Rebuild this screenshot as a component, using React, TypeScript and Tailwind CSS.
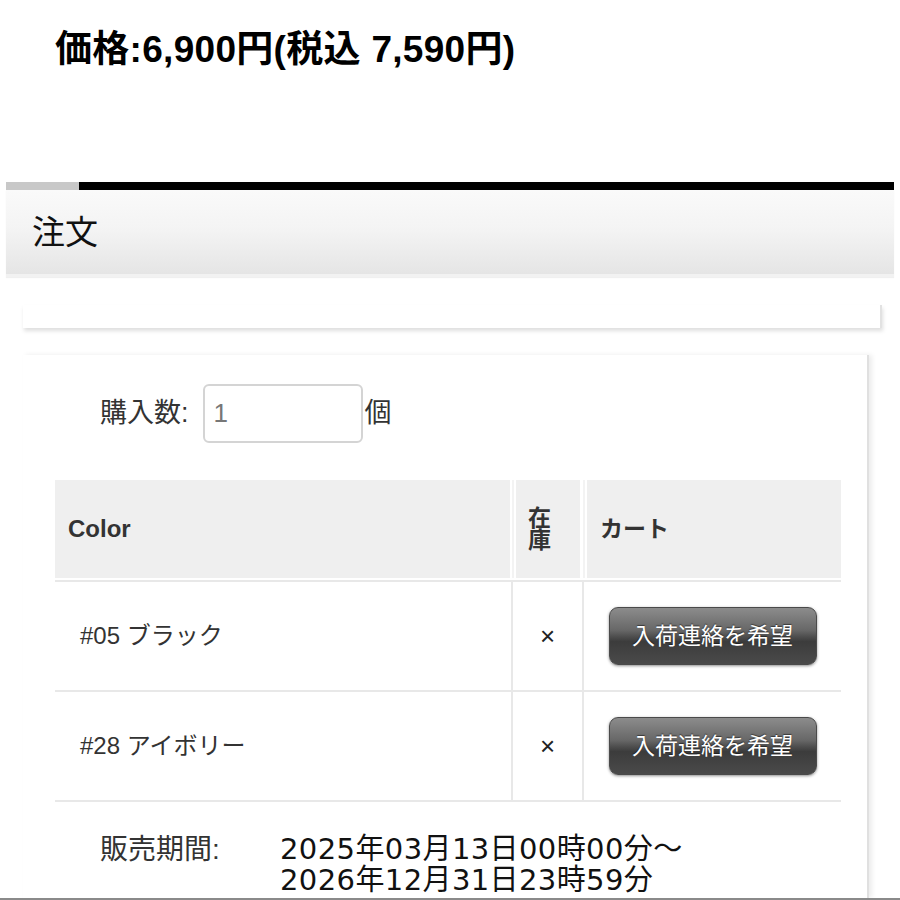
import React from 'react';

const rows = [
  { name: '#05 ブラック', stock: '×' },
  { name: '#28 アイボリー', stock: '×' },
];

const NotifyButton = () => (
  <button className="w-[208px] h-[58px] rounded-[9px] border border-[#4a4a4a] bg-[linear-gradient(to_bottom,#8c8c8c_0%,#676767_40%,#4c4c4c_52%,#3c3c3c_60%,#4a4a4a_100%)] shadow-[0_1px_3px_rgba(0,0,0,0.45)] text-white text-[23px] leading-none [text-shadow:0_-1px_1px_rgba(0,0,0,0.5)]">
    入荷連絡を希望
  </button>
);

export default function App() {
  return (
    <div className="w-[900px] h-[900px] overflow-hidden bg-white flex flex-col font-['Liberation_Sans','Noto_Sans_CJK_JP',sans-serif] text-[#222]">
      {/* price */}
      <div className="h-[182px] shrink-0 px-[55px] pt-[31px]">
        <p className="text-[37px] font-bold leading-none tracking-[0.3px] text-black">価格:6,900円(税込 7,590円)</p>
      </div>

      {/* section bar */}
      <div className="mx-[6px] flex h-[8px] shrink-0">
        <div className="w-[73px] bg-[#c8c8c8]" />
        <div className="flex-1 bg-black" />
      </div>
      <div className="mx-[6px] h-[87px] shrink-0 flex items-center pl-[26px] bg-[linear-gradient(to_bottom,#fafafa,#f4f4f4_45%,#e5e5e5)] border-b-[3px] border-[#f2f2f2] shadow-[0_1px_1px_rgba(0,0,0,0.06)]">
        <h2 className="text-[33px] font-normal leading-none text-[#111]">注文</h2>
      </div>

      {/* empty card */}
      <div className="ml-[23px] mr-[18px] mt-[28px] h-[23px] shrink-0 bg-white border-r-2 border-[#e2e2e2] shadow-[1px_3px_4px_rgba(0,0,0,0.13)]" />

      {/* order card */}
      <div className="ml-[23px] mr-[31px] mt-[27px] flex-1 bg-white border-r-2 border-[#e0e0e0] shadow-[3px_0_5px_rgba(0,0,0,0.08)] pt-[29px]">
        <div className="flex items-center pl-[77px]">
          <span className="text-[27px] text-[#333] leading-none">購入数:</span>
          <div className="ml-[14px] w-[160px] h-[59px] rounded-[6px] border-2 border-[#d4d4d4] flex items-center pl-[9px] text-[26px] text-[#777] font-light">1</div>
          <span className="ml-[2px] text-[27px] text-[#333] leading-none">個</span>
        </div>

        <div className="ml-[32px] mr-[26px] mt-[37px]">
          {/* header */}
          <div className="flex h-[100px] pb-[2px]">
            <div className="w-[455px] bg-[#efefef] flex items-center pl-[13px] text-[24px] font-bold text-[#333]">Color</div>
            <div className="w-[6px] flex justify-center"><div className="w-[2px] bg-[#f3f3f3]" /></div>
            <div className="w-[64px] bg-[#efefef] flex items-center pl-[12px]">
              <span className="w-[24px] text-[23px] leading-[22px] font-semibold text-[#333] break-all">在庫</span>
            </div>
            <div className="w-[7px] flex justify-center"><div className="w-[2px] bg-[#f3f3f3]" /></div>
            <div className="flex-1 bg-[#efefef] flex items-center pl-[13px] text-[23px] font-semibold text-[#333]">カート</div>
          </div>

          {/* rows */}
          {rows.map((r, i) => (
            <div key={i} className={`flex border-t-2 border-[#e8e8e8] ${i === rows.length - 1 ? 'border-b-2 h-[112px]' : 'h-[110px]'}`}>
              <div className="w-[456px] flex items-center pl-[25px] text-[24px] text-[#333]">{r.name}</div>
              <div className="w-[71px] border-l-2 border-[#e8e8e8] flex items-center justify-center text-[26px] text-[#222]">{r.stock}</div>
              <div className="flex-1 border-l-2 border-[#e8e8e8] flex items-center justify-center">
                <NotifyButton />
              </div>
            </div>
          ))}

          {/* sales period */}
          <div className="flex mt-[32px] pl-[45px]">
            <span className="w-[180px] text-[28px] leading-[31px] text-[#333]">販売期間:</span>
            <div className="font-['DejaVu_Sans','Noto_Sans_CJK_JP',sans-serif] text-[29px] leading-[31px] tracking-[0.4px] text-[#111]">
              <div>2025年03月13日00時00分～</div>
              <div>2026年12月31日23時59分</div>
            </div>
          </div>
        </div>
      </div>

      <div className="h-[2px] shrink-0 bg-[#8a8a8a]" />
    </div>
  );
}
